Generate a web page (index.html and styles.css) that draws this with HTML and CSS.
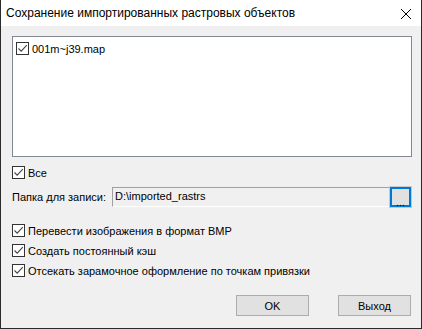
FILE: index.html
```html
<!DOCTYPE html>
<html lang="ru">
<head>
    <meta charset="UTF-8">
    <title>Сохранение импортированных растровых объектов</title>
    <link rel="stylesheet" href="styles.css">
</head>
<body>
    <div class="window">
        <div class="titlebar">
            <span class="title">Сохранение импортированных растровых объектов</span>
            <svg class="close" width="12" height="12" viewBox="0 0 12 12">
                <path d="M1 1 L11 11 M11 1 L1 11" stroke="#000" stroke-width="1" fill="none"/>
            </svg>
        </div>

        <div class="content">
            <div class="listbox">
                <label class="check item">
                    <span class="box"><svg width="11" height="11" viewBox="0 0 11 11"><path d="M1.5 5.5 L4.2 8.2 L9.8 2.2" stroke="#444" stroke-width="1.1" fill="none"/></svg></span>
                    001m~j39.map
                </label>
            </div>

            <label class="check all">
                <span class="box"><svg width="11" height="11" viewBox="0 0 11 11"><path d="M1.5 5.5 L4.2 8.2 L9.8 2.2" stroke="#444" stroke-width="1.1" fill="none"/></svg></span>
                Все
            </label>

            <div class="folder-row">
                <span class="folder-label">Папка для записи:</span>
                <div class="textbox">D:\imported_rastrs</div>
                <button class="browse">...</button>
            </div>

            <div class="options">
                <label class="check">
                    <span class="box"><svg width="11" height="11" viewBox="0 0 11 11"><path d="M1.5 5.5 L4.2 8.2 L9.8 2.2" stroke="#444" stroke-width="1.1" fill="none"/></svg></span>
                    Перевести изображения в формат BMP
                </label>
                <label class="check">
                    <span class="box"><svg width="11" height="11" viewBox="0 0 11 11"><path d="M1.5 5.5 L4.2 8.2 L9.8 2.2" stroke="#444" stroke-width="1.1" fill="none"/></svg></span>
                    Создать постоянный кэш
                </label>
                <label class="check">
                    <span class="box"><svg width="11" height="11" viewBox="0 0 11 11"><path d="M1.5 5.5 L4.2 8.2 L9.8 2.2" stroke="#444" stroke-width="1.1" fill="none"/></svg></span>
                    Отсекать зарамочное оформление по точкам привязки
                </label>
            </div>

            <div class="buttons">
                <button class="btn">OK</button>
                <button class="btn">Выход</button>
            </div>
        </div>
    </div>
</body>
</html>
```

FILE: styles.css
```css
* {
    margin: 0;
    padding: 0;
    box-sizing: border-box;
}

body {
    font-family: "Liberation Sans", Arial, sans-serif;
    font-size: 11px;
    color: #000;
    background: #f0f0f0;
}

.window {
    width: 422px;
    height: 329px;
    background: #f0f0f0;
    border: 1px solid #2b2b2b;
    border-top: none;
}

.titlebar {
    height: 26px;
    background: #fff;
    display: flex;
    align-items: center;
    justify-content: space-between;
    padding: 0 9px 0 5px;
}

.title {
    font-family: "Liberation Sans", Arial, sans-serif;
    font-size: 12px;
    color: #000;
}

.close {
    margin-top: 2px;
}

.content {
    padding: 10px 9px 0 11px;
}

.listbox {
    height: 121px;
    background: #fff;
    border: 1px solid #828790;
    padding: 5px 3px;
}

.check {
    display: flex;
    align-items: center;
    gap: 3px;
    height: 13px;
}

.box {
    width: 13px;
    height: 13px;
    border: 1px solid #333;
    background: #fff;
    display: flex;
    align-items: center;
    justify-content: center;
}

.all {
    margin-top: 9px;
}

.folder-row {
    display: flex;
    align-items: center;
    margin-top: 8px;
    height: 20px;
}

.folder-label {
    width: 100px;
    color: #000;
}

.textbox {
    width: 277px;
    height: 20px;
    background: #f0f0f0;
    border-top: 1px solid #a0a0a0;
    border-left: 1px solid #a0a0a0;
    border-bottom: 1px solid #fff;
    padding: 2px 2px;
}

.browse {
    width: 21px;
    height: 20px;
    margin-left: 1px;
    background: #e1e1e1;
    border: 2px solid #0078d7;
    outline: 1px solid #c8c8c8;
    font-family: "Liberation Sans", Arial, sans-serif;
    font-size: 11px;
    line-height: 20px;
    padding-top: 3px;
}

.options {
    display: flex;
    flex-direction: column;
    gap: 7px;
    margin-top: 17px;
}

.buttons {
    display: flex;
    justify-content: flex-end;
    gap: 29px;
    margin-top: 18px;
    padding-right: 1px;
}

.btn {
    width: 73px;
    height: 21px;
    background: #e1e1e1;
    border: 1px solid #adadad;
    font-family: "Liberation Sans", Arial, sans-serif;
    font-size: 11px;
    color: #000;
}
```
